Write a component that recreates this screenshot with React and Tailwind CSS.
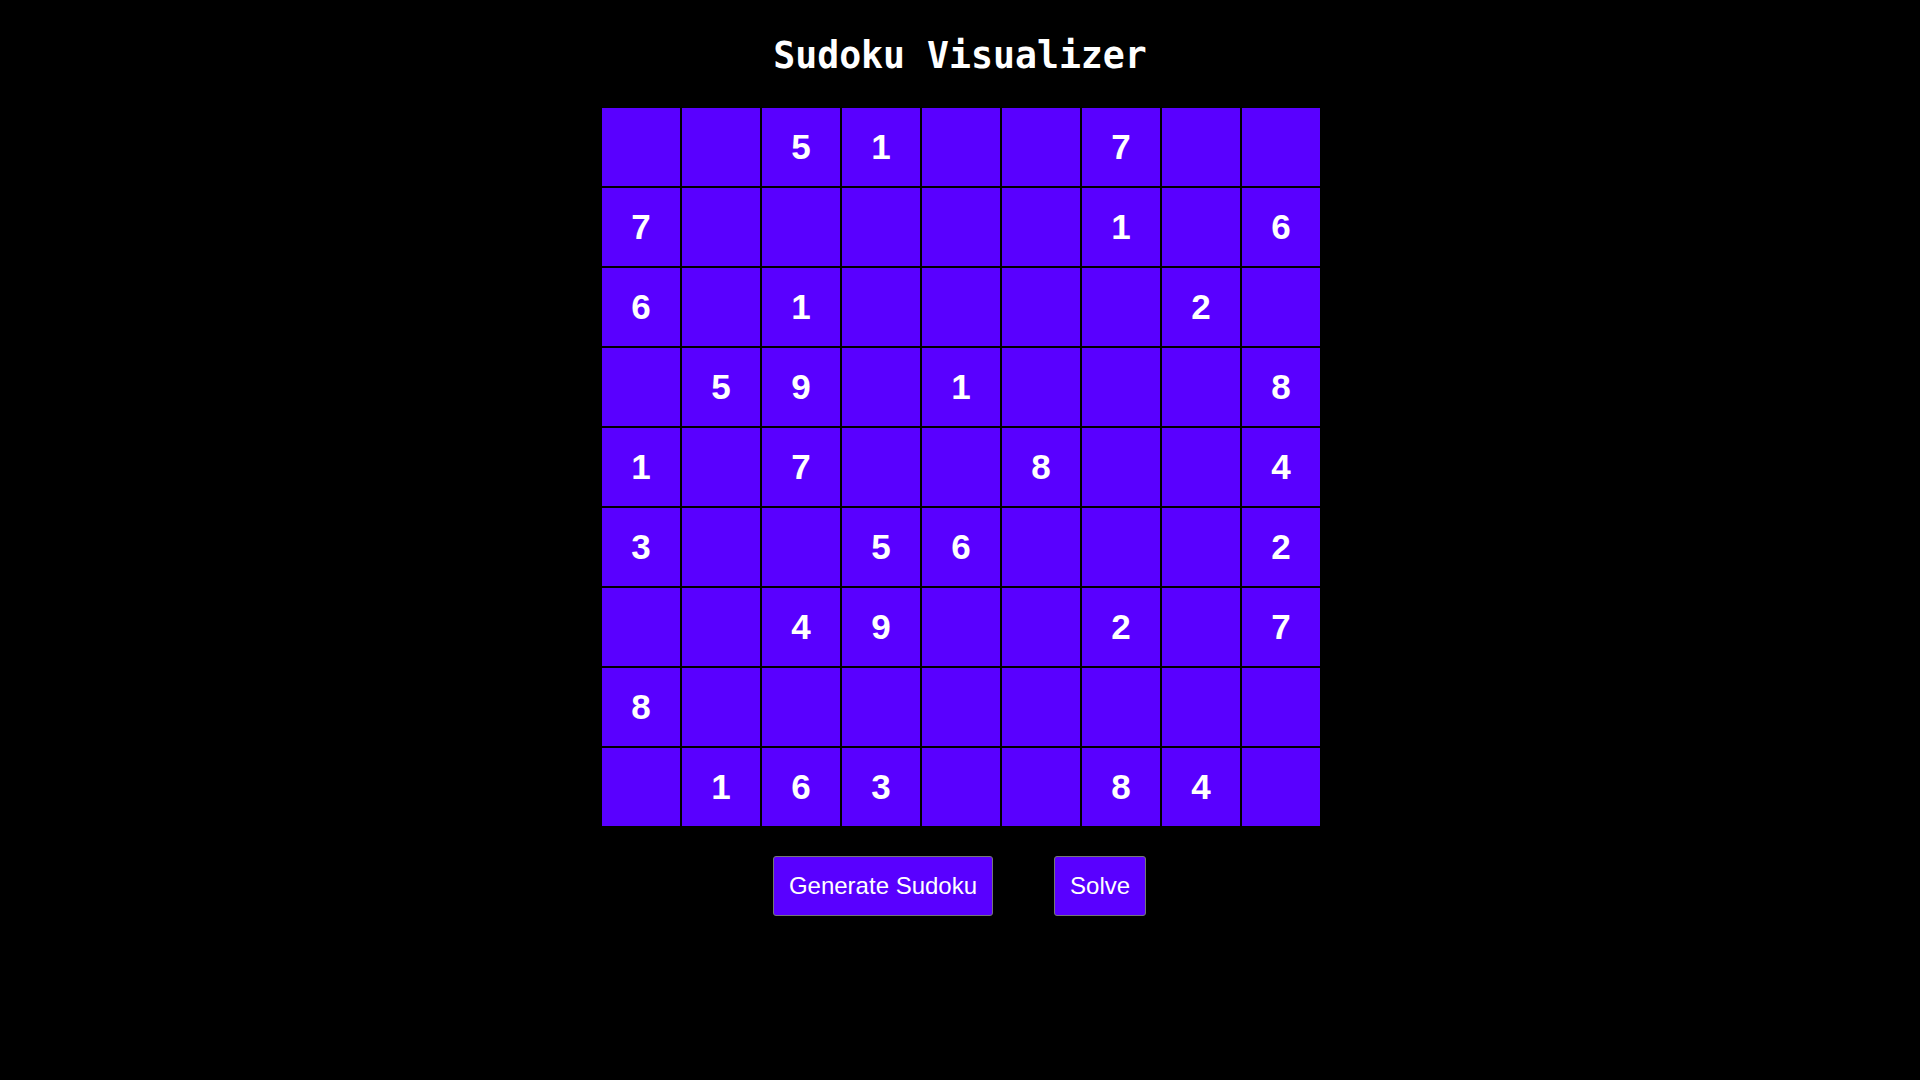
import React, { useState } from 'react';

const initialBoard = [
  [0, 0, 5, 1, 0, 0, 7, 0, 0],
  [7, 0, 0, 0, 0, 0, 1, 0, 6],
  [6, 0, 1, 0, 0, 0, 0, 2, 0],
  [0, 5, 9, 0, 1, 0, 0, 0, 8],
  [1, 0, 7, 0, 0, 8, 0, 0, 4],
  [3, 0, 0, 5, 6, 0, 0, 0, 2],
  [0, 0, 4, 9, 0, 0, 2, 0, 7],
  [8, 0, 0, 0, 0, 0, 0, 0, 0],
  [0, 1, 6, 3, 0, 0, 8, 4, 0],
];

function App() {
  const [board] = useState(initialBoard); // puzzle shown on load

  return (
    <div className="min-h-screen bg-black flex flex-col items-center">
      <h1 className="pt-[35px] mb-[31px] text-[36.5px] leading-[42px] font-bold text-white font-['DejaVu_Sans_Mono',monospace]">
        Sudoku Visualizer
      </h1>

      <div className="ml-[2px] grid grid-cols-[repeat(9,78px)] gap-[2px] bg-black">
        {board.map((row, r) =>
          row.map((val, c) => (
            <div
              key={`${r}-${c}`}
              className="w-[78px] h-[78px] bg-[#5900ff] flex items-center justify-center text-white text-[35px] font-bold font-['Liberation_Sans',Arial,sans-serif]"
            >
              {val !== 0 ? val : ''}
            </div>
          ))
        )}
      </div>

      <div className="flex gap-[61px] mt-[30px] mr-[1px]">
        <button className="h-[60px] px-[15px] bg-[#5900ff] text-white text-[24px] border border-[#767676] rounded-[3px] font-['Liberation_Sans',Arial,sans-serif]">
          Generate Sudoku
        </button>
        <button className="h-[60px] px-[15px] bg-[#5900ff] text-white text-[24px] border border-[#767676] rounded-[3px] font-['Liberation_Sans',Arial,sans-serif]">
          Solve
        </button>
      </div>
    </div>
  );
}

export default App;
